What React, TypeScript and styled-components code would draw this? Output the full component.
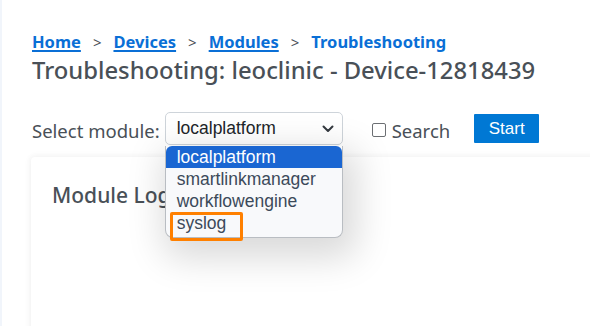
import React from "react";
import styled, { createGlobalStyle } from "styled-components";

const Global = createGlobalStyle`
  html, body { margin: 0; padding: 0; background: #ffffff; }
  body { font-family: "Noto Sans", "Open Sans", sans-serif; color: #495057; overflow: hidden; }
`;

const Page = styled.div`
  width: 590px;
  height: 326px;
  position: relative;
  overflow: hidden;
  background: #fff;
  border-left: 2px solid #f1f5fb;
  box-sizing: border-box;
`;

const Content = styled.div`
  padding: 30px 0 0 30px;
  display: flex;
  flex-direction: column;
`;

const Crumbs = styled.nav`
  display: flex;
  align-items: center;
  gap: 12px;
  font-size: 16.5px;
  font-weight: 700;
  line-height: 24px;
`;

const Crumb = styled.a`
  color: #0a6fd6;
  text-decoration: underline;
  text-underline-offset: 2px;
  text-decoration-thickness: 1.5px;
  cursor: pointer;
`;

const Current = styled.span`
  color: #0a6fd6;
`;

const Sep = styled.span`
  color: #495057;
  font-weight: 400;
  font-size: 15px;
`;

const Title = styled.h1`
  margin: 0;
  font-size: 23.8px;
  font-weight: 500;
  line-height: 32px;
  color: #495057;
`;

const Controls = styled.div`
  margin-top: 26px;
  display: flex;
  align-items: center;
  height: 33px;
`;

const Label = styled.span`
  font-size: 18.5px;
  color: #495057;
  margin: 3px 5px 0 0;
`;

const SelectWrap = styled.div`
  position: relative;
  width: 178px;
  height: 33px;
`;

const SelectBox = styled.div`
  box-sizing: border-box;
  width: 100%;
  height: 100%;
  border: 1px solid #ced4da;
  border-radius: 5px;
  background: #fff;
  display: flex;
  align-items: center;
  justify-content: space-between;
  padding: 0 8px 0 11px;
  font-family: "Liberation Sans", Arial, sans-serif;
  font-size: 17.5px;
  color: #212529;
`;

const List = styled.ul`
  position: absolute;
  top: 34px;
  left: 0;
  width: 178px;
  margin: 0;
  padding: 0 0 3px;
  list-style: none;
  box-sizing: border-box;
  background: #f8f9fb;
  border: 1px solid #b9bdc2;
  border-top: none;
  border-radius: 0 0 8px 8px;
  box-shadow: 6px 12px 36px 8px rgba(0, 0, 0, 0.15);
  font-family: "Liberation Sans", Arial, sans-serif;
  font-size: 17.5px;
  z-index: 2;
`;

const Item = styled.li<{ $active?: boolean }>`
  height: 22px;
  line-height: 22px;
  padding-left: 11px;
  color: ${(p) => (p.$active ? "#ffffff" : "#3c4a5a")};
  background: ${(p) => (p.$active ? "#1a66d2" : "transparent")};
  border-radius: ${(p) => (p.$active ? "6px 6px 0 0" : "0")};
  position: relative;
`;

const Mark = styled.span`
  position: absolute;
  left: 4px;
  top: 0;
  width: 73px;
  height: 29px;
  box-sizing: border-box;
  border: 3px solid #ff8000;
  border-radius: 2px;
`;

const CheckLabel = styled.label`
  display: flex;
  align-items: center;
  margin: 3px 0 0 29px;
  font-size: 18.5px;
  color: #495057;
  gap: 6px;
`;

const Box = styled.span`
  width: 12px;
  height: 12px;
  border: 1.5px solid #6c6f73;
  border-radius: 2px;
  display: inline-block;
`;

const StartButton = styled.button`
  margin-left: 24px;
  width: 65px;
  height: 29px;
  border: none;
  border-radius: 1px;
  background: #0078d4;
  color: #fff;
  font-family: "Liberation Sans", Arial, sans-serif;
  font-size: 17px;
  padding: 0;
`;

const Card = styled.section`
  margin-top: 12px;
  margin-left: -1px;
  width: 600px;
  height: 200px;
  background: #fff;
  box-shadow: -2px 0 6px rgba(0, 0, 0, 0.035), 0 -2px 6px rgba(0, 0, 0, 0.03);
  border-radius: 4px;
  padding: 25px 21px;
  box-sizing: border-box;
`;

const CardTitle = styled.h2`
  margin: 0;
  font-size: 21px;
  font-weight: 500;
  color: #495057;
  line-height: 27px;
`;

const Chevron = () => (
  <svg width="12" height="8" viewBox="0 0 12 8">
    <path d="M1.5 1.5 L6 6 L10.5 1.5" fill="none" stroke="#343a40" strokeWidth="2" strokeLinecap="round" strokeLinejoin="round" />
  </svg>
);

export default function App() {
  return (
    <>
      <Global />
      <Page>
        <Content>
          <Crumbs>
            <Crumb>Home</Crumb>
            <Sep>&gt;</Sep>
            <Crumb>Devices</Crumb>
            <Sep>&gt;</Sep>
            <Crumb>Modules</Crumb>
            <Sep>&gt;</Sep>
            <Current>Troubleshooting</Current>
          </Crumbs>
          <Title>Troubleshooting: leoclinic - Device-12818439</Title>
          <Controls>
            <Label>Select module:</Label>
            <SelectWrap>
              <SelectBox>
                <span>localplatform</span>
                <Chevron />
              </SelectBox>
              <List>
                <Item $active>localplatform</Item>
                <Item>smartlinkmanager</Item>
                <Item>workflowengine</Item>
                <Item>
                  syslog
                  <Mark />
                </Item>
              </List>
            </SelectWrap>
            <CheckLabel>
              <Box />
              Search
            </CheckLabel>
            <StartButton>Start</StartButton>
          </Controls>
          <Card>
            <CardTitle>Module Log</CardTitle>
          </Card>
        </Content>
      </Page>
    </>
  );
}
